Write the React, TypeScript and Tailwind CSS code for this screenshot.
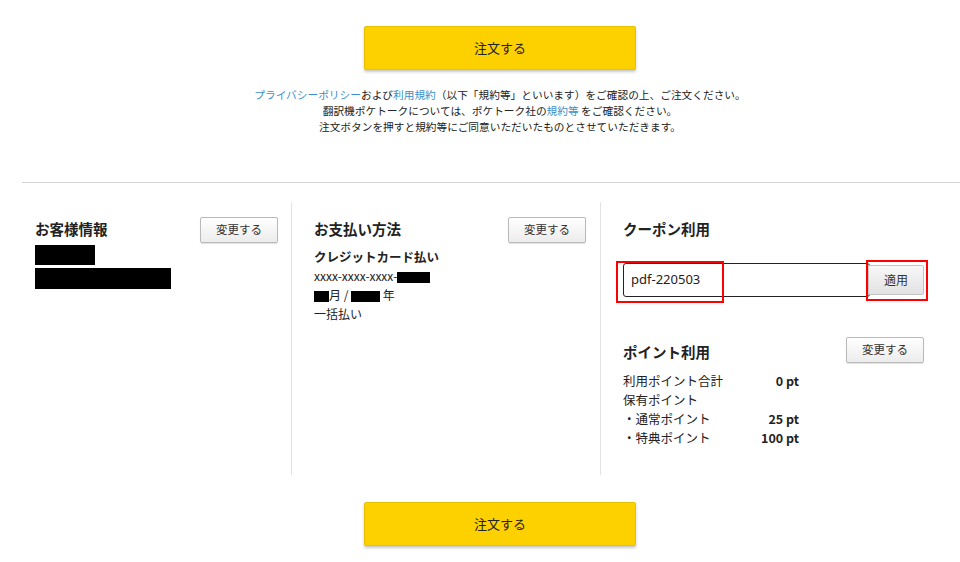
const font = "font-['Noto_Sans_CJK_JP','Noto_Sans',sans-serif]";

function OrderButton() {
  return (
    <button className="flex h-[44px] w-[272px] items-center justify-center rounded-[2px] border border-[#e8c200] bg-[#fdd000] text-[13px] text-[#222] shadow-[0_2px_3px_rgba(0,0,0,0.22)]">
      注文する
    </button>
  );
}

function ChangeButton() {
  return (
    <button className="flex h-[26px] w-[78px] items-center justify-center rounded-[2px] border border-[#b9b9b9] bg-gradient-to-b from-white to-[#ececec] text-[11.5px] text-[#333] shadow-[0_1px_1px_rgba(0,0,0,0.12)]">
      変更する
    </button>
  );
}

const Redact = ({ w, h }: { w: number; h: number }) => (
  <span className="inline-block bg-black align-middle" style={{ width: w, height: h }} />
);

const points = [
  ['利用ポイント合計', '0 pt'],
  ['保有ポイント', ''],
  ['・通常ポイント', '25 pt'],
  ['・特典ポイント', '100 pt'],
];

export default function App() {
  return (
    <div className={`h-[562px] w-[960px] overflow-hidden bg-white text-[#222] ${font}`}>
      <div className="ml-[22px] w-[956px]">
        <div className="flex flex-col items-center pt-[26px]">
          <OrderButton />
          <div className="mt-[17px] text-center text-[10.7px] leading-[16px] text-[#222]">
            <p>
              <span className="text-[#3b8fc8]">プライバシーポリシー</span>および
              <span className="text-[#3b8fc8]">利用規約</span>（以下「規約等」といいます）をご確認の上、ご注文ください。
            </p>
            <p>
              翻訳機ポケトークについては、ポケトーク社の<span className="text-[#3b8fc8]">規約等</span> をご確認ください。
            </p>
            <p>注文ボタンを押すと規約等にご同意いただいたものとさせていただきます。</p>
          </div>
        </div>

        <div className="mt-[47px] border-t border-[#d4d4d4]" />

        <div className="mt-[19px] flex h-[273px]">
          {/* お客様情報 */}
          <div className="w-[269px] px-[13px] pt-[15px]">
            <div className="flex h-[26px] items-center justify-between">
              <h2 className="pb-[3px] text-[14.5px] font-bold">お客様情報</h2>
              <ChangeButton />
            </div>
            <div className="mt-[2px] h-[20px] w-[60px] bg-black" />
            <div className="mt-[3px] h-[21px] w-[136px] bg-black" />
          </div>

          {/* お支払い方法 */}
          <div className="w-[309px] border-l border-[#e3e3e3] pl-[22px] pr-[14px] pt-[15px]">
            <div className="flex h-[26px] items-center justify-between">
              <h2 className="pb-[3px] text-[14.5px] font-bold">お支払い方法</h2>
              <ChangeButton />
            </div>
            <div className="mt-[4px] text-[12px] leading-[19px]">
              <p className="text-[12.5px] font-bold">クレジットカード払い</p>
              <p>
                xxxx-xxxx-xxxx-<Redact w={33} h={11} />
              </p>
              <p>
                <Redact w={15} h={11} />月 / <Redact w={29} h={11} /> 年
              </p>
              <p>一括払い</p>
            </div>
          </div>

          {/* クーポン / ポイント */}
          <div className="relative w-[324px] border-l border-[#e3e3e3] pl-[22px] pt-[15px]">
            <div className="flex h-[26px] items-center">
              <h2 className="pb-[3px] text-[14.5px] font-bold">クーポン利用</h2>
            </div>
            <div className="mt-[20px] flex h-[34px] items-center">
              <div className="flex h-[34px] w-[248px] items-center rounded-[3px] border border-[#222] pl-[7px] font-['Noto_Sans',sans-serif] text-[13px]">
                pdf-220503
              </div>
              <button className="-ml-[2px] flex h-[30px] w-[56px] items-center justify-center rounded-[2px] border border-[#c4c4c4] bg-gradient-to-b from-[#f8f8f8] to-[#e2e2e2] text-[12px] text-[#333]">
                適用
              </button>
            </div>

            <div className="mt-[40px] flex items-start justify-between">
              <h2 className="mt-[5px] text-[14.5px] font-bold leading-[19px]">ポイント利用</h2>
              <ChangeButton />
            </div>
            <div className="mt-[8px] w-[176px] text-[12.5px] leading-[19px]">
              {points.map(([label, value]) => (
                <div key={label} className="flex justify-between">
                  <span>{label}</span>
                  <span className="font-bold">{value}</span>
                </div>
              ))}
            </div>

            <div className="absolute left-[15px] top-[59px] h-[42px] w-[108px] border-2 border-[#ff0000]" />
            <div className="absolute left-[265px] top-[58px] h-[41px] w-[62px] border-2 border-[#ff0000]" />
          </div>
        </div>

        <div className="mt-[27px] flex justify-center">
          <OrderButton />
        </div>
      </div>
    </div>
  );
}
